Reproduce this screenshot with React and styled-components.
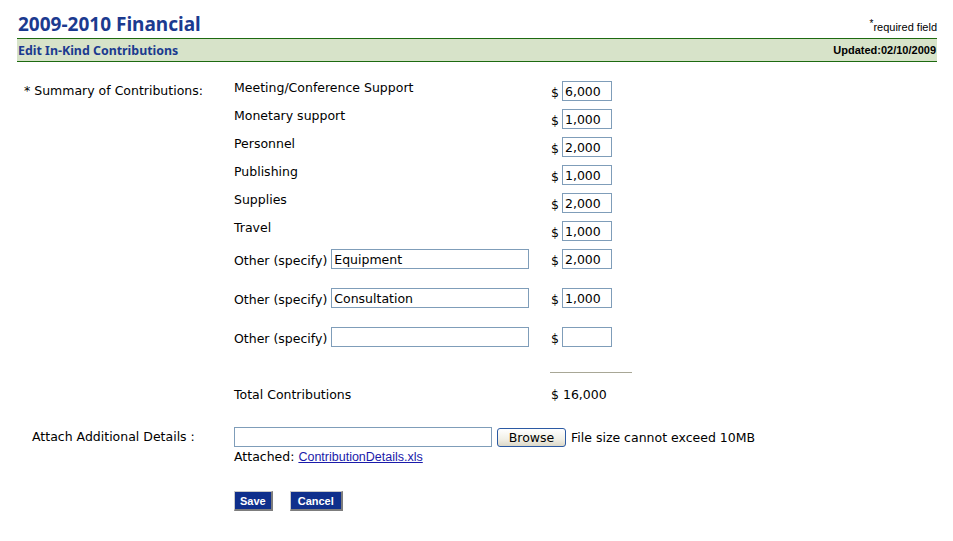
import React from 'react';
import styled, { createGlobalStyle } from 'styled-components';

const GlobalStyle = createGlobalStyle`
   body {
      margin: 0;
      background: #fff;
      color: #000;
      font-family: 'DejaVu Sans', Verdana, sans-serif;
      font-size: 12.5px;
   }
   * {
      box-sizing: border-box;
   }
`;

const Page = styled.div`
   padding: 0 16px 0 17px;
`;

const Header = styled.div`
   height: 38px;
   display: flex;
   justify-content: space-between;
   align-items: flex-end;
`;

const Title = styled.h1`
   margin: 0 0 2px 1px;
   font-family: 'Noto Sans', sans-serif;
   font-size: 19px;
   line-height: 24px;
   font-weight: bold;
   color: #1b3a8f;
`;

const Required = styled.div`
   margin-bottom: 4px;
   font-family: 'Liberation Sans', Arial, sans-serif;
   font-size: 11px;
   line-height: 14px;

   sup {
      font-size: 10px;
      line-height: 0;
      vertical-align: 4px;
   }
`;

const Bar = styled.div`
   height: 24px;
   display: flex;
   justify-content: space-between;
   align-items: center;
   padding: 0 1px;
   background: #d7e3c9;
   border-top: 1px solid #1d6a10;
   border-bottom: 1px solid #1d6a10;
`;

const BarTitle = styled.h2`
   margin: 0;
   font-family: 'Noto Sans', sans-serif;
   font-size: 12.4px;
   font-weight: bold;
   color: #1b3a8f;
`;

const Updated = styled.span`
   font-family: 'Liberation Sans', Arial, sans-serif;
   font-size: 11px;
   font-weight: bold;
`;

const Form = styled.div`
   margin-top: 17px;
   display: grid;
   grid-template-columns: 217px 1fr;
`;

const SideLabel = styled.div`
   padding-left: ${({ indent }) => indent}px;
   padding-top: ${({ top }) => top}px;
   line-height: 16px;
`;

const Items = styled.div`
   display: flex;
   flex-direction: column;
`;

const ItemRow = styled.div`
   height: 28px;
   display: grid;
   grid-template-columns: 316px 1fr;
   align-items: start;
   line-height: 16px;

   & > span {
      padding-top: 1px;
   }
`;

const OtherRow = styled.div`
   height: 39px;
   padding-top: 2px;
   display: grid;
   grid-template-columns: 316px 1fr;
   align-items: start;
`;

const OtherLabel = styled.div`
   display: flex;
   align-items: center;
   gap: 4px;
   height: 20px;

   span {
      padding-top: 2px;
   }
`;

const Amount = styled.div`
   display: flex;
   align-items: center;
   gap: 3px;
   height: 20px;
   margin-top: ${({ offset }) => offset || 0}px;
   padding-left: 1px;

   span {
      padding-top: 3px;
   }
`;

const TextInput = styled.input`
   width: ${({ w }) => w}px;
   height: 20px;
   padding: 0 2px;
   border: 1px solid #7f9db9;
   font-family: 'DejaVu Sans', Verdana, sans-serif;
   font-size: 12.5px;
   color: #000;
   background: #fff;
   outline: none;
`;

const Separator = styled.div`
   margin: 8px 0 0 316px;
   width: 82px;
   height: 1px;
   background: #a8a796;
`;

const TotalRow = styled.div`
   margin-top: 14px;
   display: grid;
   grid-template-columns: 316px 1fr;
   line-height: 16px;

   span:last-child {
      padding-left: 1px;
   }
`;

const AttachBlock = styled.div`
   margin-top: 24px;
   display: flex;
   flex-direction: column;
`;

const FileRow = styled.div`
   display: flex;
   align-items: center;
`;

const BrowseButton = styled.button`
   width: 69px;
   height: 19px;
   margin: 0 5px 0 5px;
   padding: 0;
   border: 1px solid #2c5aa3;
   border-radius: 3px;
   background: linear-gradient(#ffffff, #f1efe6 60%, #dcd8c8);
   font-family: 'DejaVu Sans', Verdana, sans-serif;
   font-size: 12.5px;
   color: #000;
`;

const Attached = styled.div`
   margin-top: 2px;
   line-height: 16px;

   a {
      font-family: 'Liberation Sans', Arial, sans-serif;
      font-size: 12.5px;
      color: #1a1aaa;
   }
`;

const Actions = styled.div`
   margin-top: 26px;
   display: flex;
   gap: 17px;
`;

const ActionButton = styled.button`
   height: 20px;
   padding: 0 ${({ pad }) => pad}px;
   background: #0f2f8c;
   color: #fff;
   font-family: 'Liberation Sans', Arial, sans-serif;
   font-size: 11px;
   font-weight: bold;
   border-style: solid;
   border-width: 1px 2px 2px 1px;
   border-color: #c9c9c9 #7d7d7d #7d7d7d #c9c9c9;
`;

const items = [
   ['Meeting/Conference Support', '6,000'],
   ['Monetary support', '1,000'],
   ['Personnel', '2,000'],
   ['Publishing', '1,000'],
   ['Supplies', '2,000'],
   ['Travel', '1,000'],
];

const others = [
   ['Equipment', '2,000'],
   ['Consultation', '1,000'],
   ['', ''],
];

const App = () => (
   <Page>
      <GlobalStyle />
      <Header>
         <Title>2009-2010 Financial</Title>
         <Required>
            <sup>*</sup>required field
         </Required>
      </Header>
      <Bar>
         <BarTitle>Edit In-Kind Contributions</BarTitle>
         <Updated>Updated:02/10/2009</Updated>
      </Bar>
      <Form>
         <SideLabel indent={7} top={4}>
            * Summary of Contributions:
         </SideLabel>
         <Items>
            {items.map(([label, value]) => (
               <ItemRow key={label}>
                  <span>{label}</span>
                  <Amount offset={2}>
                     <span>$</span>
                     <TextInput w={50} defaultValue={value} />
                  </Amount>
               </ItemRow>
            ))}
            {others.map(([label, value], i) => (
               <OtherRow key={i}>
                  <OtherLabel>
                     <span>Other (specify)</span>
                     <TextInput w={198} defaultValue={label} />
                  </OtherLabel>
                  <Amount>
                     <span>$</span>
                     <TextInput w={50} defaultValue={value} />
                  </Amount>
               </OtherRow>
            ))}
            <Separator />
            <TotalRow>
               <span>Total Contributions</span>
               <span>$ 16,000</span>
            </TotalRow>
         </Items>
         <SideLabel indent={15} top={26}>
            Attach Additional Details :
         </SideLabel>
         <AttachBlock>
            <FileRow>
               <TextInput w={258} />
               <BrowseButton>Browse</BrowseButton>
               <span>File size cannot exceed 10MB</span>
            </FileRow>
            <Attached>
               Attached: <a href="#">ContributionDetails.xls</a>
            </Attached>
            <Actions>
               <ActionButton pad={5}>Save</ActionButton>
               <ActionButton pad={7}>Cancel</ActionButton>
            </Actions>
         </AttachBlock>
      </Form>
   </Page>
);

export default App;
